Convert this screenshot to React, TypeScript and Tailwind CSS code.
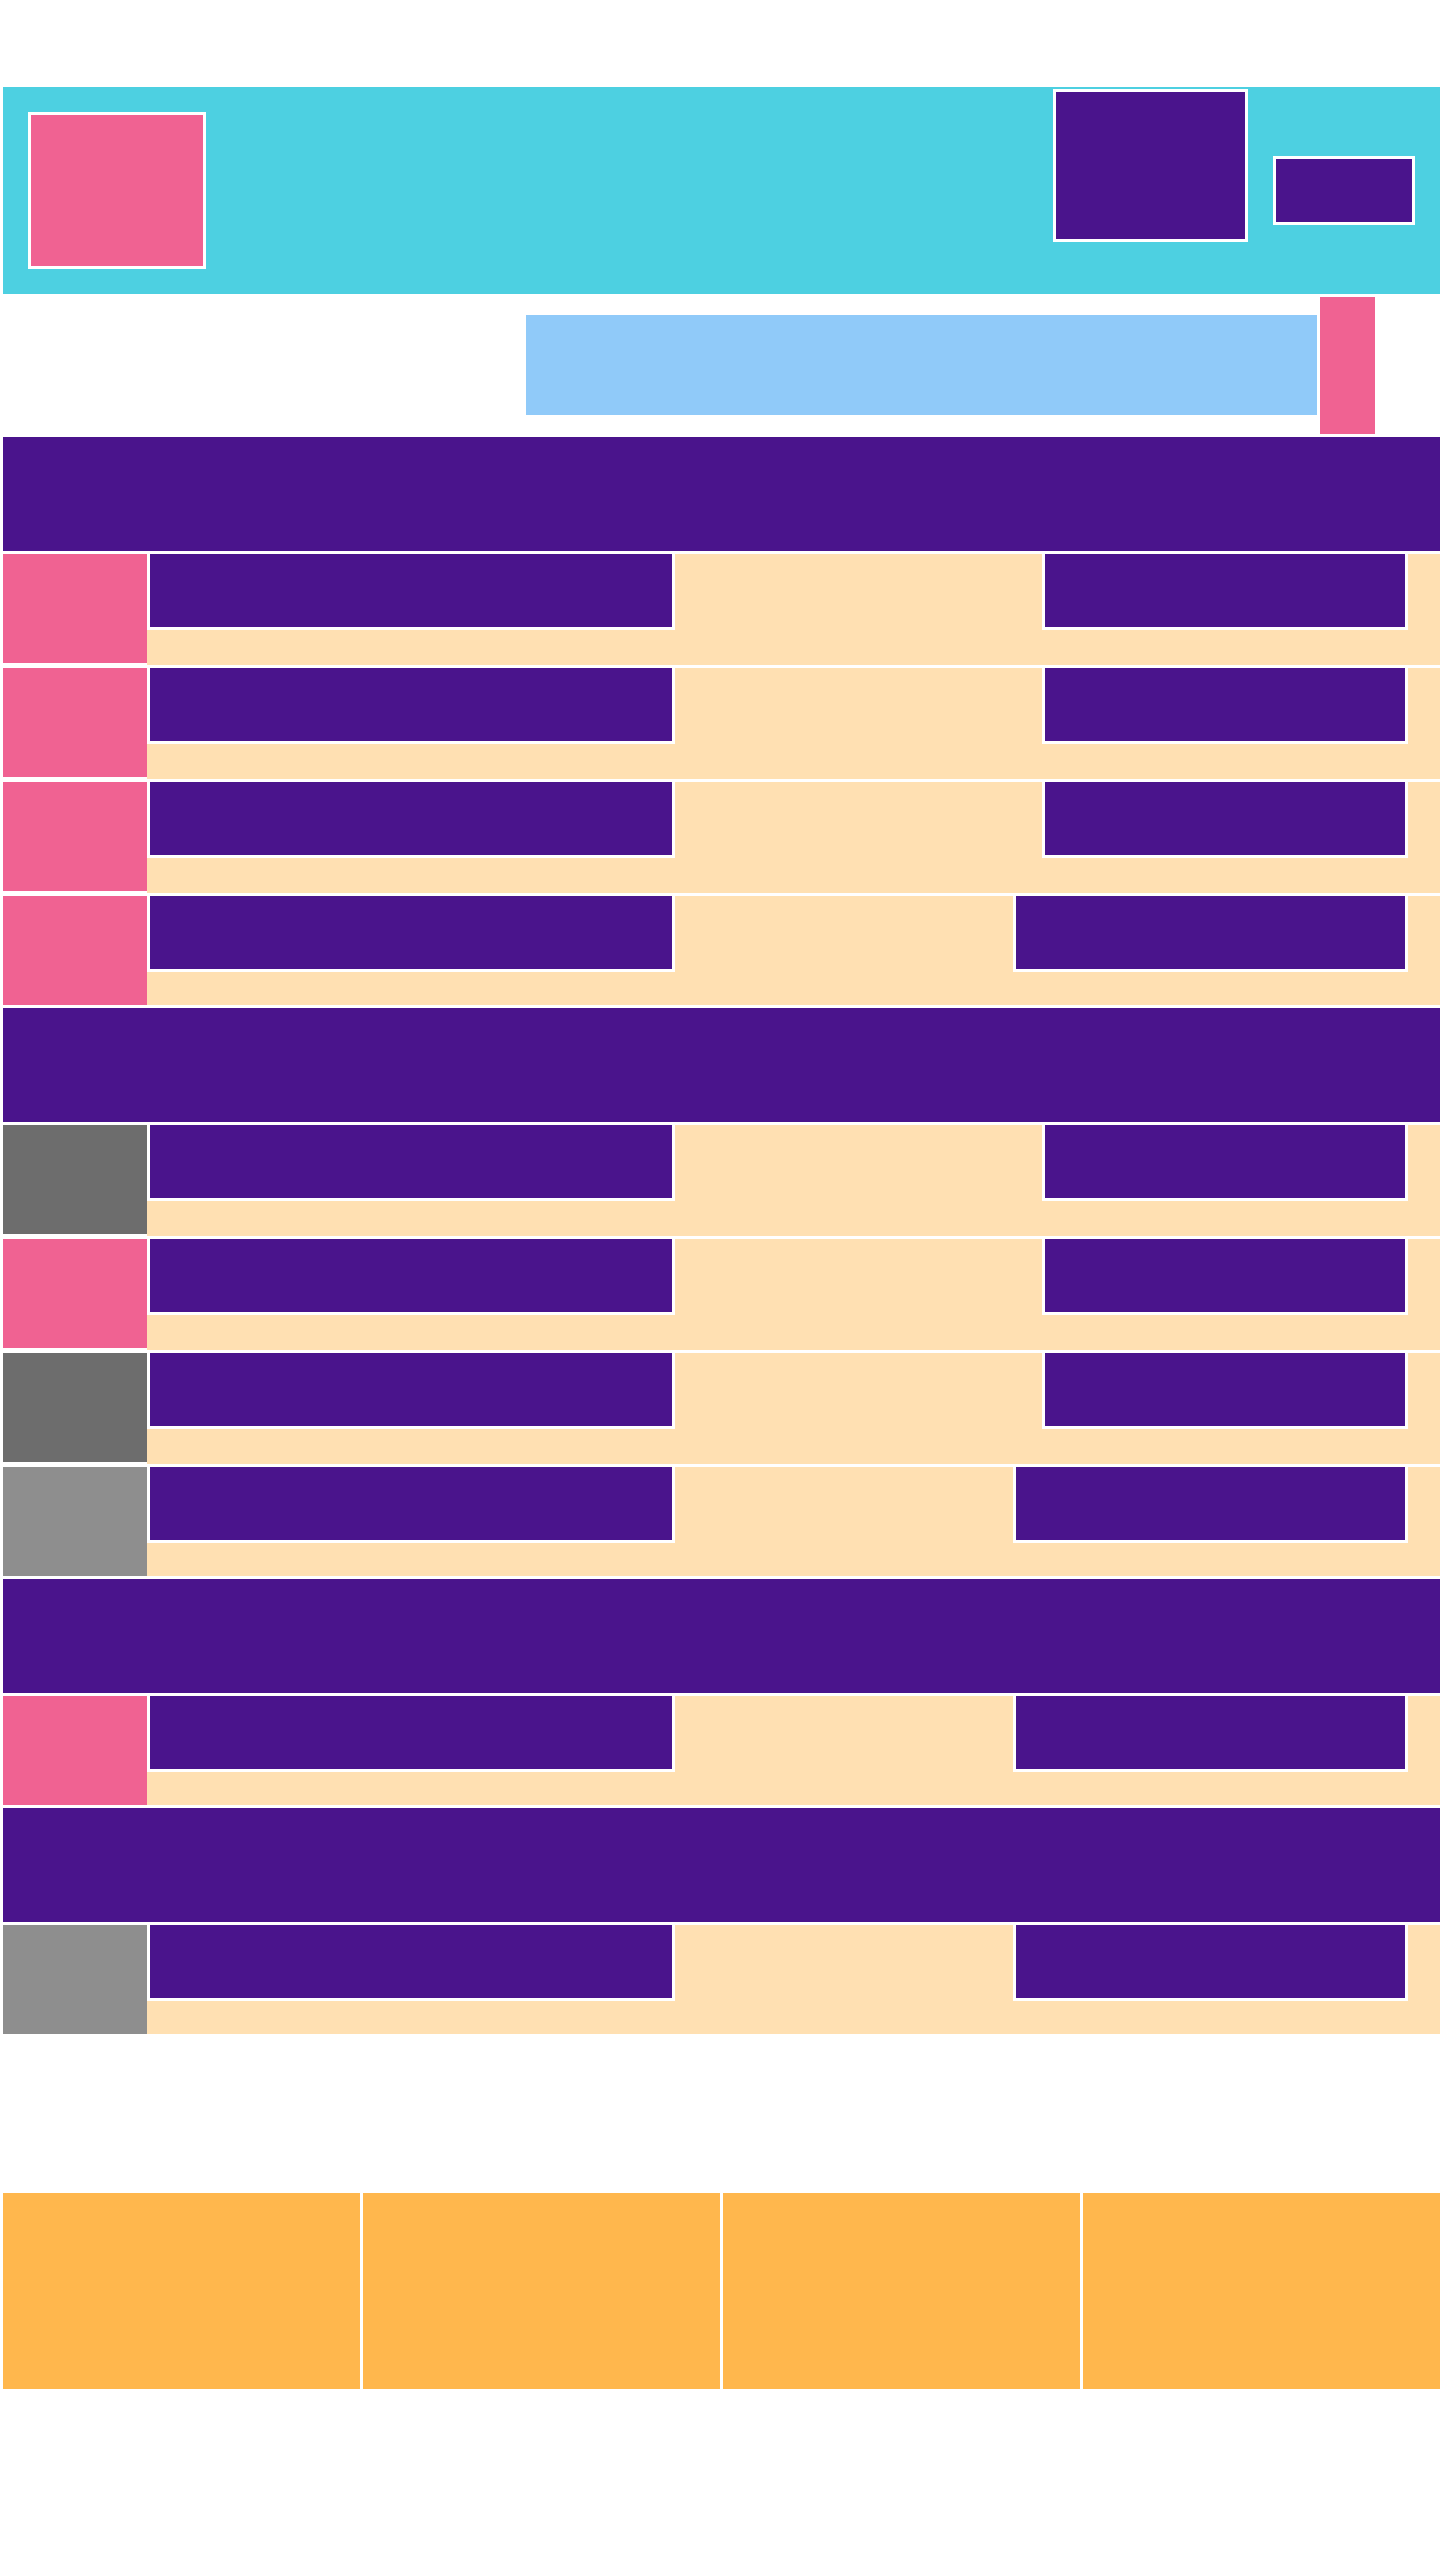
type Row = { tone: "pink" | "dark" | "light"; wide: boolean };

const sections: Row[][] = [
  [
    { tone: "pink", wide: false },
    { tone: "pink", wide: false },
    { tone: "pink", wide: false },
    { tone: "pink", wide: true },
  ],
  [
    { tone: "dark", wide: false },
    { tone: "pink", wide: false },
    { tone: "dark", wide: false },
    { tone: "light", wide: true },
  ],
  [{ tone: "pink", wide: true }],
  [{ tone: "light", wide: true }],
];

const toneClass = {
  pink: "bg-[#f06292]",
  dark: "bg-[#6d6d6d]",
  light: "bg-[#8e8e8e]",
};

function ListRow({ row, last }: { row: Row; last: boolean }) {
  return (
    <div className="flex mb-[3px]">
      <div className={`w-[144px] h-[109px] shrink-0 ${toneClass[row.tone]}`} />
      <div
        className={`flex-1 flex justify-between items-start pr-[32px] bg-[#ffe0b2] ${
          last ? "h-[109px]" : "h-[111px]"
        }`}
      >
        <div className="w-[528px] h-[76px] border-x-[3px] border-b-[3px] border-white bg-[#4a148c]" />
        <div
          className={`h-[76px] border-x-[3px] border-b-[3px] border-white bg-[#4a148c] ${
            row.wide ? "w-[395px]" : "w-[366px]"
          }`}
        />
      </div>
    </div>
  );
}

export default function App() {
  return (
    <div className="min-h-[2560px] bg-white pt-[87px] pl-[3px]">
      {/* header */}
      <header className="h-[207px] flex justify-between items-start px-[25px] bg-[#4dd0e1]">
        <div className="mt-[25px] w-[178px] h-[157px] border-[3px] border-white bg-[#f06292]" />
        <div className="flex items-start gap-[25px]">
          <div className="mt-[2px] w-[195px] h-[153px] border-[3px] border-white bg-[#4a148c]" />
          <div className="mt-[69px] w-[142px] h-[69px] border-[3px] border-white bg-[#4a148c]" />
        </div>
      </header>

      {/* search */}
      <div className="flex items-start h-[143px] pl-[523px]">
        <div className="mt-[21px] w-[791px] h-[100px] bg-[#90caf9]" />
        <div className="mt-[3px] ml-[3px] w-[55px] h-[137px] bg-[#f06292]" />
      </div>

      {sections.map((rows, i) => (
        <section key={i}>
          <div className="h-[114px] mb-[3px] bg-[#4a148c]" />
          {rows.map((row, j) => (
            <ListRow key={j} row={row} last={j === rows.length - 1} />
          ))}
        </section>
      ))}

      {/* footer */}
      <footer className="mt-[159px] grid grid-cols-4 gap-[3px]">
        <div className="h-[196px] bg-[#ffb74d]" />
        <div className="h-[196px] bg-[#ffb74d]" />
        <div className="h-[196px] bg-[#ffb74d]" />
        <div className="h-[196px] bg-[#ffb74d]" />
      </footer>
    </div>
  );
}
